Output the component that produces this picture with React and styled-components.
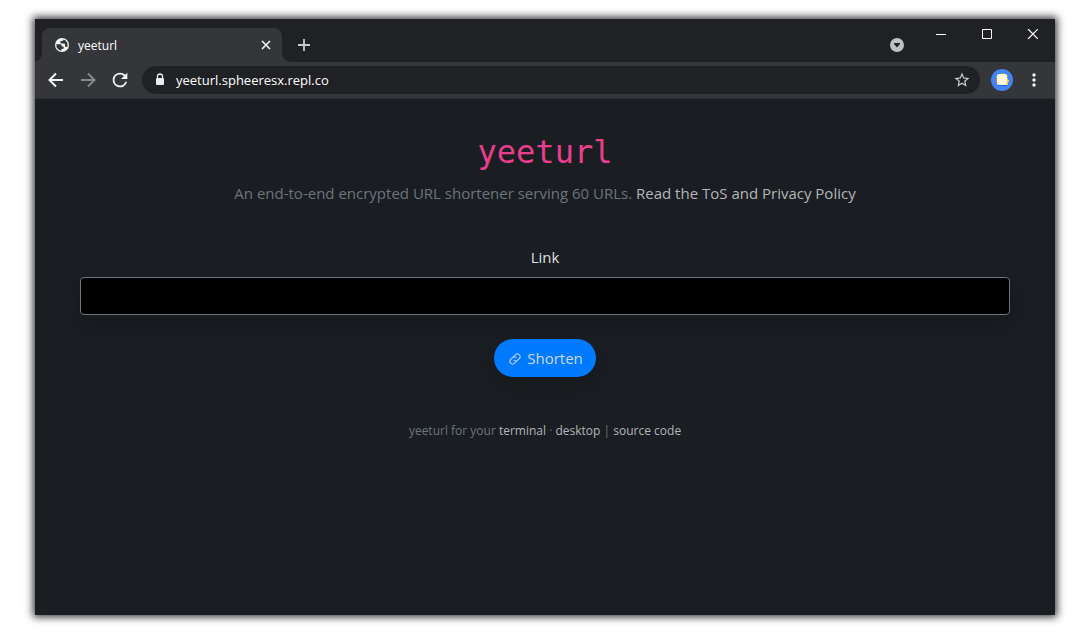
import React from 'react';
import styled, { createGlobalStyle } from 'styled-components';

const GlobalStyle = createGlobalStyle`
  * { box-sizing: border-box; }
  body { margin: 0; background: #fff; font-family: "Open Sans", "Noto Sans", sans-serif; }
  svg { display: block; flex: none; }
`;

const Desktop = styled.div`
  min-height: 100vh;
  padding: 19px 34px 24px 35px;
  display: flex;
`;
const BrowserWindow = styled.div`
  flex: 1;
  min-width: 0;
  display: flex;
  flex-direction: column;
  background: #1a1d21;
  box-shadow: 0 0 8px 2px rgba(0, 0, 0, 0.8);
`;
const TabStrip = styled.header`
  height: 43px;
  display: flex;
  align-items: flex-end;
  padding-left: 7px;
  overflow: hidden;
  background: #202124;
`;
const Tab = styled.div`
  position: relative;
  width: 240px;
  height: 34px;
  padding: 0 8px 0 12px;
  display: flex;
  align-items: center;
  gap: 8px;
  border-radius: 8px 8px 0 0;
  background: #35363a;
  color: #fff;
  font-size: 12px;
  &::before, &::after {
    content: '';
    position: absolute;
    bottom: 0;
    width: 8px;
    height: 8px;
  }
  &::before { right: 100%; background: radial-gradient(circle at 0 0, #202124 7px, #35363a 8px); }
  &::after { left: 100%; background: radial-gradient(circle at 100% 0, #202124 7px, #35363a 8px); }
`;
const TabTitle = styled.span`
  flex: 1;
`;
const IconButton = styled.button`
  width: ${(p) => p.$width || 32}px;
  height: ${(p) => p.$height || 28}px;
  padding: 0;
  border: 0;
  background: none;
  color: ${(p) => p.$color || '#f1f3f4'};
  display: flex;
  align-items: center;
  justify-content: center;
`;
const NewTab = styled.div`
  flex: 1;
  padding-left: 6px;
  height: 34px;
  display: flex;
  align-items: center;
`;
const SearchTabs = styled.div`
  height: 34px;
  display: flex;
  align-items: center;
  margin-right: 4px;
`;
const WindowControls = styled.div`
  align-self: flex-start;
  display: flex;
`;
const Toolbar = styled.div`
  height: 36px;
  padding: 0 5px;
  display: flex;
  align-items: center;
  background: #35363a;
`;
const AddressBar = styled.div`
  flex: 1;
  min-width: 0;
  height: 28px;
  margin: 0 6px;
  padding: 0 2px 0 13px;
  display: flex;
  align-items: center;
  gap: 11px;
  border-radius: 14px;
  background: #202124;
`;
const AddressInput = styled.input`
  flex: 1;
  min-width: 0;
  padding: 0;
  border: 0;
  outline: 0;
  background: none;
  color: #fff;
  font: 13px/20px "Open Sans", "Noto Sans", sans-serif;
`;
const Page = styled.main`
  flex: 1;
  padding: 34px 45px 40px;
  border-top: 1px solid #2c2e32;
  text-align: center;
  color: #6c757d;
`;
const Title = styled.h1`
  margin: 0 0 10px;
  color: #e83e8c;
  font: 400 32px/38px "DejaVu Sans Mono", monospace;
`;
const Lead = styled.p`
  margin: 0 0 40px;
  font-size: 15px;
  line-height: 24px;
`;
const Link = styled.a`
  color: #b4b6b8;
  text-decoration: none;
`;
const Label = styled.label`
  display: block;
  margin-bottom: 8px;
  color: #dee0e2;
  font-size: 15px;
  line-height: 24px;
`;
const LinkInput = styled.input`
  display: block;
  width: 100%;
  height: 38px;
  margin-bottom: 24px;
  padding: 6px 12px;
  border: 1px solid #6c757d;
  border-radius: 4px;
  background: #000;
  color: #fff;
  font: inherit;
  box-shadow: 0 8px 16px rgba(0, 0, 0, 0.15);
`;
const ShortenButton = styled.button`
  display: inline-flex;
  align-items: center;
  justify-content: center;
  gap: 6px;
  min-width: 102px;
  height: 38px;
  padding: 0 12px;
  border: 0;
  border-radius: 19px;
  background: #007bff;
  color: #d0d7df;
  font: 15px/24px "Open Sans", "Noto Sans", sans-serif;
  box-shadow: 0 8px 16px rgba(0, 0, 0, 0.15);
`;
const Footer = styled.footer`
  margin-top: 44px;
  font-size: 12px;
  line-height: 20px;
`;

const Globe = () => (
  <svg width="16" height="16" viewBox="0 0 16 16">
    <circle cx="8" cy="8" r="7" fill="#f1f3f4" />
    <path d="M2.400 7.200H6c1 0 1.700.700 1.700 1.600v.7h1.500c.3 0 .500.200.500.500v.7c0 .8-.6 1.300-1.400 1.300h-.9v1.800A5.700 5.700 0 0 1 2.400 7.200z" fill="#35363a" />
    <path d="M9.500 2.500c-.2 1.100-.9 1.600-1.900 1.600H6.500v1.300c0 .6.500 1 1.100 1h2.200c.8 0 1.300.6 1.300 1.300v1.200c.1.900 1 1.300 2.100 1.200A5.700 5.700 0 0 0 9.500 2.500z" fill="#35363a" />
  </svg>
);
const Stroke = ({ size = 16, d, width = 2 }) => (
  <svg width={size} height={size} viewBox="0 0 16 16" fill="none" stroke="currentColor" strokeWidth={width}>
    <path d={d} />
  </svg>
);
const Reload = () => (
  <svg width="22" height="22" viewBox="0 0 24 24" fill="currentColor">
    <path d="M17.650 6.350A7.960 7.960 0 0 0 12 4a8 8 0 1 0 7.730 10h-2.080A6 6 0 1 1 12 6c1.660 0 3.140.690 4.220 1.780L13 11h7V4z" />
  </svg>
);
const Lock = () => (
  <svg width="10" height="14" viewBox="0 0 10 14">
    <path d="M2.500 6V3.500a2.500 2.500 0 0 1 5 0V6" fill="none" stroke="#e8eaed" strokeWidth="1.300" />
    <rect x="1" y="5" width="8" height="7" rx="1" fill="#e8eaed" />
  </svg>
);
const Star = () => (
  <svg width="18" height="18" viewBox="0 0 24 24" fill="#c8cbcf">
    <path d="M22 9.240l-7.190-.62L12 2 9.190 8.630 2 9.240l5.460 4.730L5.820 21 12 17.270 18.180 21l-1.630-7.030L22 9.240zM12 15.400l-3.760 2.270 1-4.280-3.320-2.880 4.380-.38L12 6.100l1.710 4.040 4.380.38-3.320 2.880 1 4.280L12 15.400z" />
  </svg>
);
const Avatar = () => (
  <svg width="22" height="22" viewBox="0 0 22 22">
    <circle cx="11" cy="11" r="11" fill="#4285f4" />
    <path d="M7 15h9v2H8z" fill="#1b62d8" />
    <path d="M5 9h2v5H5z" fill="#d9774a" />
    <path d="M5 7h2v2H5zM10 4h3v2h-3zM15 6h2v2h-2z" fill="#79c72c" />
    <path d="M15 9h2v2h1v2h-1v3h-2z" fill="#f6c52e" />
    <rect x="6" y="5" width="10" height="11" rx="2" fill="#fff8e1" />
  </svg>
);
const ChainLink = () => (
  <svg width="14" height="16" viewBox="0 0 14 16" fill="none" stroke="currentColor" strokeWidth="1">
    <g transform="translate(1 2) rotate(-45 7 7)">
      <path d="M7 9.700H3.700a2.700 2.700 0 0 1 0-5.400H6a2.700 2.700 0 0 1 2.700 2.700" />
      <path d="M7 4.300h3.300a2.700 2.700 0 0 1 0 5.400H8A2.700 2.700 0 0 1 5.300 7" />
    </g>
  </svg>
);

export default function App() {
  return (
    <>
      <GlobalStyle />
      <Desktop>
        <BrowserWindow>
          <TabStrip>
            <Tab>
              <Globe />
              <TabTitle>yeeturl</TabTitle>
              <IconButton $width={16} $height={16} aria-label="Close tab">
                <Stroke size={16} width={1.6} d="M4 4l8 8M12 4l-8 8" />
              </IconButton>
            </Tab>
            <NewTab>
              <IconButton $color="#c8cbcf" aria-label="New tab">
                <Stroke size={16} width={1.8} d="M8 2v12M2 8h12" />
              </IconButton>
            </NewTab>
            <SearchTabs>
              <IconButton aria-label="Search tabs">
                <svg width="14" height="14" viewBox="0 0 14 14">
                  <circle cx="7" cy="7" r="7" fill="#bdc1c6" />
                  <path d="M4 5h6v1L7 9.500 4 6z" fill="#202124" />
                </svg>
              </IconButton>
            </SearchTabs>
            <WindowControls>
              <IconButton $width={46} $height={30} aria-label="Minimize">
                <svg width="12" height="10"><path d="M2 5.500h10" stroke="#fff" /></svg>
              </IconButton>
              <IconButton $width={46} $height={30} aria-label="Maximize">
                <svg width="12" height="10"><path d="M2.500 .5h9v9h-9z" fill="none" stroke="#fff" /></svg>
              </IconButton>
              <IconButton $width={46} $height={30} aria-label="Close">
                <svg width="12" height="10"><path d="M2 0l10 10M12 0L2 10" stroke="#fff" strokeWidth="1.200" /></svg>
              </IconButton>
            </WindowControls>
          </TabStrip>
          <Toolbar>
            <IconButton aria-label="Back"><Stroke d="M15 8H2M8 1.500L1.500 8 8 14.500" /></IconButton>
            <IconButton $color="#86888b" aria-label="Forward"><Stroke d="M1 8h13M8 1.500L14.500 8 8 14.500" /></IconButton>
            <IconButton aria-label="Reload"><Reload /></IconButton>
            <AddressBar>
              <Lock />
              <AddressInput aria-label="Address" defaultValue="yeeturl.spheeresx.repl.co" />
              <IconButton aria-label="Bookmark"><Star /></IconButton>
            </AddressBar>
            <IconButton aria-label="Profile"><Avatar /></IconButton>
            <IconButton aria-label="Menu">
              <svg width="4" height="16" fill="#f1f3f4">
                <circle cx="2" cy="3" r="1.700" /><circle cx="2" cy="8" r="1.700" /><circle cx="2" cy="13" r="1.700" />
              </svg>
            </IconButton>
          </Toolbar>
          <Page>
            <Title>yeeturl</Title>
            <Lead>
              An end-to-end encrypted URL shortener serving 60 URLs.{' '}
              <Link href="#policy">Read the ToS and Privacy Policy</Link>
            </Lead>
            <Label htmlFor="link">Link</Label>
            <LinkInput id="link" type="text" />
            <ShortenButton type="button"><ChainLink />Shorten</ShortenButton>
            <Footer>
              yeeturl for your <Link href="#terminal">terminal</Link> · <Link href="#desktop">desktop</Link> |{' '}
              <Link href="#source">source code</Link>
            </Footer>
          </Page>
        </BrowserWindow>
      </Desktop>
    </>
  );
}
